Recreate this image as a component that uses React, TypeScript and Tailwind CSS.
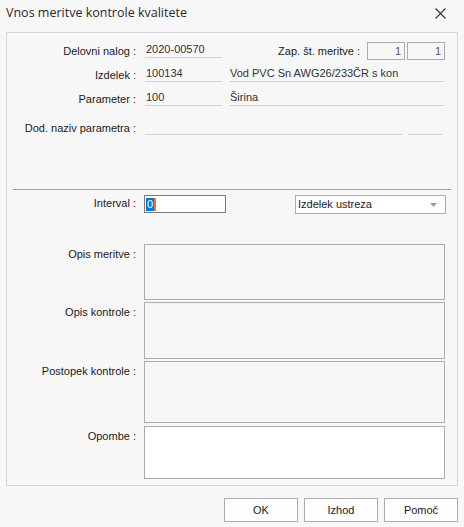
import React from "react";

function Label({ children, top }: { children: React.ReactNode; top?: boolean }) {
  return (
    <div
      className={`w-[129px] shrink-0 text-right text-[#1a1a1a] ${top ? "leading-[20px]" : "leading-[18px]"}`}
    >
      {children}
    </div>
  );
}

function Field({ value, w }: { value?: string; w: string }) {
  return (
    <div className={`${w} h-[16px] shrink-0 border-b border-[#d2d2d2] pl-[1px] leading-[15px] text-[#333] whitespace-nowrap overflow-hidden`}>
      {value}
    </div>
  );
}

function Memo({ h, white }: { h: string; white?: boolean }) {
  return <div className={`${h} w-[301px] border border-[#acacac] ${white ? "bg-white" : "bg-[#f7f7f7]"}`} />;
}

export default function App() {
  return (
    <div className="w-[464px] h-[527px] bg-[#f7f7f7] flex flex-col font-['Liberation_Sans',Arial,sans-serif] text-[11px] select-none">
      {/* title bar */}
      <div className="h-[26px] flex items-center justify-between pl-[6px] pr-[18px]">
        <span className="font-['Open_Sans',sans-serif] text-[12.5px] text-[#2a2a2a]">
          Vnos meritve kontrole kvalitete
        </span>
        <svg width="11" height="11" viewBox="0 0 11 11" className="text-[#333]">
          <path d="M0.5 0.5 L10.5 10.5 M10.5 0.5 L0.5 10.5" stroke="currentColor" strokeWidth="1.1" />
        </svg>
      </div>

      {/* main panel */}
      <div className="mt-[6px] mx-[6px] w-[452px] h-[454px] border border-[#d6d6d6] flex flex-col pt-[9px]">
        {/* row 1 */}
        <div className="flex items-start h-[18px] gap-[8px] pr-[12px]">
          <Label>Delovni nalog :</Label>
          <div className="ml-[1px]">
            <Field value="2020-00570" w="w-[77px]" />
          </div>
          <div className="flex-1" />
          <div className="flex items-center gap-[2px]">
            <span className="mr-[5px] leading-[18px] text-[#1a1a1a]">Zap. št. meritve :</span>
            <div className="w-[38px] h-[18px] border border-[#acacac] text-right pr-[3px] leading-[16px] text-[#555]">1</div>
            <div className="w-[38px] h-[18px] border border-[#acacac] text-right pr-[3px] leading-[16px] text-[#555]">1</div>
          </div>
        </div>

        {/* row 2 */}
        <div className="flex items-start h-[18px] gap-[8px] mt-[6px]">
          <Label>Izdelek :</Label>
          <div className="ml-[1px] flex gap-[7px]">
            <Field value="100134" w="w-[77px]" />
            <Field value="Vod PVC Sn AWG26/233ČR s kon" w="w-[215px]" />
          </div>
        </div>

        {/* row 3 */}
        <div className="flex items-start h-[18px] gap-[8px] mt-[6px]">
          <Label>Parameter :</Label>
          <div className="ml-[1px] flex gap-[7px]">
            <Field value="100" w="w-[77px]" />
            <Field value="Širina" w="w-[215px]" />
          </div>
        </div>

        {/* row 4 */}
        <div className="flex items-start h-[18px] gap-[8px] mt-[11px]">
          <Label>Dod. naziv parametra :</Label>
          <div className="ml-[1px] flex gap-[5px]">
            <Field w="w-[258px]" />
            <Field w="w-[35px]" />
          </div>
        </div>

        {/* separator */}
        <div className="mx-[6px] mt-[52px] border-t border-[#a0a0a0]" />

        {/* interval row */}
        <div className="flex items-start mt-[4px] gap-[8px] pr-[11px]">
          <Label>Interval :</Label>
          <div className="mt-[1px] w-[82px] h-[18px] border border-[#7a7a7a] bg-white flex items-center pl-[1px]">
            <span className="bg-[#0078d7] text-white leading-[13px] px-[1px]">0</span>
            <span className="w-[2px] h-[13px] bg-[#e8771e]" />
          </div>
          <div className="flex-1" />
          <div className="mt-[1px] w-[151px] h-[19px] border border-[#acacac] bg-white flex items-center justify-between pl-[2px] pr-[8px]">
            <span className="text-[#1a1a1a]">Izdelek ustreza</span>
            <svg width="7" height="4" viewBox="0 0 7 4">
              <path d="M0 0 H7 L3.5 4 Z" fill="#9a9a9a" />
            </svg>
          </div>
        </div>

        {/* memos */}
        <div className="flex items-start gap-[8px] mt-[30px]">
          <Label top>Opis meritve :</Label>
          <Memo h="h-[56px]" />
        </div>
        <div className="flex items-start gap-[8px] mt-[2px]">
          <Label top>Opis kontrole :</Label>
          <Memo h="h-[57px]" />
        </div>
        <div className="flex items-start gap-[8px] mt-[2px]">
          <Label top>Postopek kontrole :</Label>
          <Memo h="h-[62px]" />
        </div>
        <div className="flex items-start gap-[8px] mt-[3px]">
          <Label top>Opombe :</Label>
          <Memo h="h-[53px]" white />
        </div>
      </div>

      {/* buttons */}
      <div className="flex justify-end gap-[6px] mt-[12px] pr-[6px]">
        {["OK", "Izhod", "Pomoč"].map((b) => (
          <div
            key={b}
            className="w-[74px] h-[24px] border border-[#adadad] bg-[#fdfdfd] flex items-center justify-center text-[#222]"
          >
            {b}
          </div>
        ))}
      </div>
    </div>
  );
}
